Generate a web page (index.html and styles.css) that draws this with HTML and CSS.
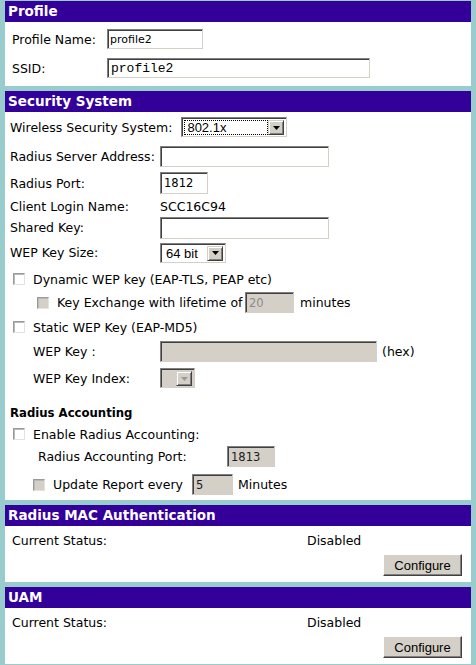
FILE: index.html
```html
<!DOCTYPE html>
<html>
<head>
<meta charset="utf-8">
<link rel="stylesheet" href="styles.css">
</head>
<body>
<div class="page">

  <section class="panel">
    <h2 class="panel-title">Profile</h2>
    <div class="panel-body profile-grid">
      <span class="label">Profile Name:</span>
      <span class="field small w96">profile2</span>
      <span class="label">SSID:</span>
      <span class="field mono w263">profile2</span>
    </div>
  </section>

  <section class="panel">
    <h2 class="panel-title">Security System</h2>
    <div class="panel-body security">
      <div class="row r1">
        <span class="label">Wireless Security System:</span>
        <span class="select w106 sel-gap">
          <span class="select-value focus">802.1x</span>
          <span class="select-btn"><svg width="7" height="4" viewBox="0 0 7 4"><path d="M0 0h7L3.5 4z" fill="#000"/></svg></span>
        </span>
      </div>
      <div class="row r2">
        <span class="label lcol">Radius Server Address:</span>
        <span class="field w169 h21"></span>
      </div>
      <div class="row r3">
        <span class="label lcol">Radius Port:</span>
        <span class="field w48 h22">1812</span>
      </div>
      <div class="row r4">
        <span class="label lcol">Client Login Name:</span>
        <span class="label">SCC16C94</span>
      </div>
      <div class="row r5">
        <span class="label lcol">Shared Key:</span>
        <span class="field w169 h22"></span>
      </div>
      <div class="row r6">
        <span class="label lcol">WEP Key Size:</span>
        <span class="select w66">
          <span class="select-value">64 bit</span>
          <span class="select-btn"><svg width="7" height="4" viewBox="0 0 7 4"><path d="M0 0h7L3.5 4z" fill="#000"/></svg></span>
        </span>
      </div>
      <div class="row r7">
        <span class="check ind3"></span>
        <span class="label">Dynamic WEP key (EAP-TLS, PEAP etc)</span>
      </div>
      <div class="row r8">
        <span class="check off ind27"></span>
        <span class="label kx-col">Key Exchange with lifetime of</span>
        <span class="field off dim w49 h21">20</span>
        <span class="label gap-l6">minutes</span>
      </div>
      <div class="row r9">
        <span class="check ind3"></span>
        <span class="label">Static WEP Key (EAP-MD5)</span>
      </div>
      <div class="row r10">
        <span class="label lcol sub">WEP Key :</span>
        <span class="field off w217 h21"></span>
        <span class="label gap-l5">(hex)</span>
      </div>
      <div class="row r11">
        <span class="label lcol sub">WEP Key Index:</span>
        <span class="select off w35">
          <span class="select-value"></span>
          <span class="select-btn"><svg width="7" height="4" viewBox="0 0 7 4"><path d="M0 0h7L3.5 4z" fill="#9a9a9a"/></svg></span>
        </span>
      </div>
      <div class="row r12">
        <span class="label strong">Radius Accounting</span>
      </div>
      <div class="row r13">
        <span class="check ind3"></span>
        <span class="label">Enable Radius Accounting:</span>
      </div>
      <div class="row r14">
        <span class="label acc-col">Radius Accounting Port:</span>
        <span class="field off w48 h21">1813</span>
      </div>
      <div class="row r15">
        <span class="check off ind23"></span>
        <span class="label upd-col">Update Report every</span>
        <span class="field off w41 h21">5</span>
        <span class="label gap-l5">Minutes</span>
      </div>
    </div>
  </section>

  <section class="panel">
    <h2 class="panel-title">Radius MAC Authentication</h2>
    <div class="panel-body status">
      <div class="status-row">
        <span class="label status-col">Current Status:</span>
        <span class="label">Disabled</span>
      </div>
      <div class="btn-row"><button class="btn">Configure</button></div>
    </div>
  </section>

  <section class="panel">
    <h2 class="panel-title">UAM</h2>
    <div class="panel-body status">
      <div class="status-row">
        <span class="label status-col">Current Status:</span>
        <span class="label">Disabled</span>
      </div>
      <div class="btn-row"><button class="btn">Configure</button></div>
    </div>
  </section>

</div>
</body>
</html>
```

FILE: styles.css
```css
html, body {
  margin: 0;
  padding: 0;
  background: #99cccc;
}

.page {
  padding: 1px 5px 1px 5px;
  display: flex;
  flex-direction: column;
  gap: 5px;
  font-family: "DejaVu Sans", Verdana, sans-serif;
  font-size: 12.5px;
  color: #000;
}

.panel {
  background: #fff;
}

.panel-title {
  margin: 0;
  height: 21px;
  line-height: 21px;
  background: #330099;
  color: #fff;
  font-size: 13.5px;
  font-weight: bold;
  padding-left: 3px;
}

.label {
  white-space: nowrap;
}

.strong {
  font-weight: bold;
  font-size: 11.7px;
}

/* Profile block */
.profile-grid {
  height: 64px;
  box-sizing: border-box;
  padding: 7px 0 0 7px;
  display: grid;
  grid-template-columns: 95px auto;
  grid-auto-rows: 20px;
  row-gap: 9px;
  align-items: center;
  justify-items: start;
}

/* Text fields, drawn sunken */
.field {
  box-sizing: border-box;
  height: 20px;
  display: inline-flex;
  align-items: center;
  flex: none;
  padding-left: 3px;
  background: #fff;
  border-style: solid;
  border-width: 1px;
  border-color: #808080 #d4d0c8 #d4d0c8 #808080;
  box-shadow: inset 1px 1px 0 #404040;
  font-size: 11.5px;
  color: #000;
  white-space: nowrap;
  overflow: hidden;
}
.field.small {
  font-size: 11px;
  padding-left: 2px;
}
.field.off {
  background: #d4d0c8;
  color: #202020;
}
.field.dim {
  color: #8a8a8a;
}
.field.mono {
  font-family: "Liberation Mono", "Courier New", monospace;
  font-size: 13px;
}
.h21 { height: 21px; }
.h22 { height: 22px; }
.w41 { width: 41px; }
.w48 { width: 48px; }
.w49 { width: 49px; }
.w96 { width: 96px; }
.w169 { width: 169px; }
.w217 { width: 217px; }
.w263 { width: 263px; }

/* Drop-down boxes */
.select {
  box-sizing: border-box;
  height: 20px;
  display: inline-flex;
  align-items: stretch;
  flex: none;
  background: #fff;
  border-style: solid;
  border-width: 1px;
  border-color: #808080 #d4d0c8 #d4d0c8 #808080;
  box-shadow: inset 1px 1px 0 #404040;
  padding: 2px 2px 1px 2px;
  font-family: "Liberation Sans", Arial, sans-serif;
  font-size: 13px;
}
.select.off {
  background: #d4d0c8;
}
.select-value {
  flex: 1;
  display: flex;
  align-items: center;
  padding-left: 2px;
  box-sizing: border-box;
  border: 1px solid transparent;
}
.select-value.focus {
  border: 1px dotted #000;
}
.select-btn {
  width: 16px;
  box-sizing: border-box;
  background: #d4d0c8;
  border-style: solid;
  border-width: 1px;
  border-color: #d4d0c8 #404040 #404040 #d4d0c8;
  box-shadow: inset 1px 1px 0 #fff, inset -1px -1px 0 #808080;
  display: flex;
  align-items: center;
  justify-content: center;
}
.w35 { width: 35px; }
.w66 { width: 66px; }
.w106 { width: 106px; }
.sel-gap { margin-left: 9px; }

/* Security rows */
.security {
  padding: 0 0 0 5px;
  display: flex;
  flex-direction: column;
}
.row {
  display: flex;
  align-items: center;
}
.lcol { width: 150px; flex: none; }
.lcol.sub { width: 127px; padding-left: 23px; }
.acc-col { width: 189px; padding-left: 28px; flex: none; }
.kx-col { width: 188px; flex: none; }
.upd-col { width: 139px; flex: none; }
.gap-l5 { margin-left: 5px; }
.gap-l6 { margin-left: 6px; }

.r1 { height: 30px; }
.r2 { height: 29px; }
.r3 { height: 24px; }
.r4 { height: 22px; }
.r5 { height: 21px; }
.r6 { height: 29px; }
.r7 { height: 24px; }
.r8 { height: 23px; }
.r9 { height: 26px; }
.r10 { height: 22px; }
.r11 { height: 32px; }
.r12 { height: 22px; margin-top: 8px; }
.r13 { height: 20px; }
.r14 { height: 25px; }
.r15 { height: 31px; }

/* Check boxes */
.check {
  box-sizing: border-box;
  width: 12px;
  height: 12px;
  flex: none;
  background: #fff;
  border-style: solid;
  border-width: 1px;
  border-color: #9a9a9a #e4e2de #e4e2de #9a9a9a;
  box-shadow: inset 1px 1px 0 #b8b8b8;
  margin-right: 8px;
}
.check.off {
  background: #d4d0c8;
}
.ind3 { margin-left: 3px; }
.ind23 { margin-left: 23px; }
.ind27 { margin-left: 27px; }

/* Status blocks */
.status {
  padding: 4px 9px 6px 7px;
}
.status-row {
  height: 20px;
  display: flex;
  align-items: center;
}
.status-col { width: 295px; }
.btn-row {
  margin-top: 4px;
  display: flex;
  justify-content: flex-end;
}
.btn {
  box-sizing: border-box;
  width: 79px;
  height: 22px;
  padding: 0;
  margin: 0;
  background: #d4d0c8;
  border-style: solid;
  border-width: 1px;
  border-color: #fff #404040 #404040 #fff;
  box-shadow: inset -1px -1px 0 #808080;
  font-family: "Liberation Sans", Arial, sans-serif;
  font-size: 13px;
  color: #000;
}
```
